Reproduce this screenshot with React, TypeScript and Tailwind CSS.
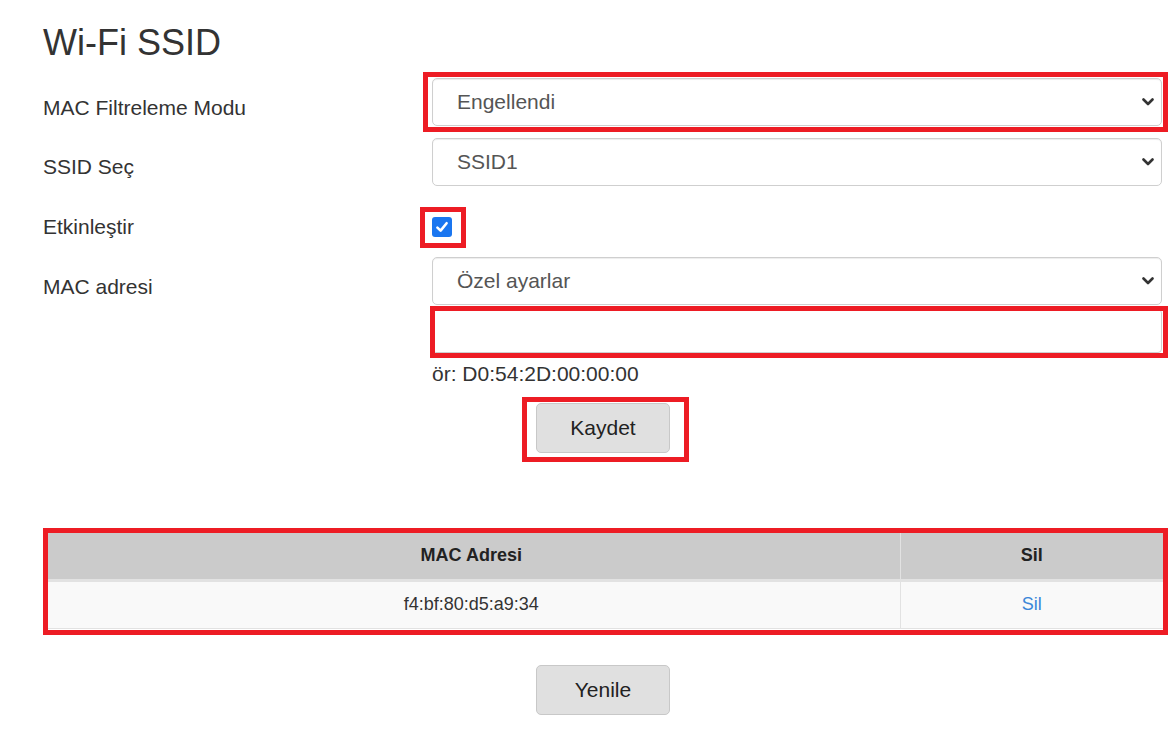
import { ReactNode } from 'react';

// annotation frame drawn over a control
function Mark({ className }: { className: string }) {
  return <div className={`pointer-events-none absolute border-[5px] border-[#ed1c24] ${className}`} />;
}

function Select({ value }: { value: string }) {
  return (
    <div className="relative h-[48px] w-full">
      <select
        defaultValue={value}
        className="h-full w-full appearance-none rounded-[5px] border border-[#cfcfcf] bg-white pl-[24px] text-[21px] text-[#555] shadow-[inset_0_1px_1px_rgba(0,0,0,0.075)] outline-none"
      >
        <option>{value}</option>
      </select>
      <svg
        viewBox="0 0 12 8"
        className="pointer-events-none absolute right-[8px] top-[20px] h-[8px] w-[12px]"
        fill="none"
        stroke="#333"
        strokeWidth="2.6"
        strokeLinecap="round"
        strokeLinejoin="round"
      >
        <path d="M1.5 1.5 6 6l4.5-4.5" />
      </svg>
    </div>
  );
}

function Row({ label, labelClass, children, className = '' }: { label: string; labelClass: string; children: ReactNode; className?: string }) {
  return (
    <div className={`flex ${className}`}>
      <div className={`w-[389px] shrink-0 text-[21px] leading-[24px] text-[#333] ${labelClass}`}>{label}</div>
      <div className="w-[730px]">{children}</div>
    </div>
  );
}

function Button({ children }: { children: ReactNode }) {
  return (
    <button className="h-[50px] w-[134px] rounded-[5px] border border-[#c8c8c8] bg-[#e0e0e0] text-[21px] text-[#222]">
      {children}
    </button>
  );
}

export default function App() {
  return (
    <div className="h-[734px] w-[1170px] overflow-hidden bg-white font-['Liberation_Sans',Arial,sans-serif]">
      <div className="ml-[43px] w-[1120px]">
        <h1 className="mt-[25px] text-[36px] leading-[36px] text-[#333]">Wi-Fi SSID</h1>

        <Row label="MAC Filtreleme Modu" labelClass="pt-[18px]" className="mt-[17px]">
          <div className="relative">
            <Select value="Engellendi" />
            <Mark className="-bottom-[6px] -left-[9px] -right-[6px] -top-[6px]" />
          </div>
        </Row>

        <Row label="SSID Seç" labelClass="pt-[17px]" className="mt-[12px]">
          <Select value="SSID1" />
        </Row>

        <Row label="Etkinleştir" labelClass="" className="mt-[29px] items-center">
          <div className="relative h-[20px] w-[20px]">
            <div className="flex h-[20px] w-[20px] items-center justify-center rounded-[3px] bg-[#1a76f0]">
              <svg viewBox="0 0 16 16" className="h-[16px] w-[16px]" fill="none" stroke="#fff" strokeWidth="2.6" strokeLinecap="round" strokeLinejoin="round">
                <path d="M3.4 8.6 6.6 11.6 12.6 4.2" />
              </svg>
            </div>
            <Mark className="-bottom-[11px] -left-[12px] -right-[14px] -top-[10px]" />
          </div>
        </Row>

        <Row label="MAC adresi" labelClass="pt-[18px]" className="mt-[18px]">
          <Select value="Özel ayarlar" />
          <div className="relative mt-[4px] h-[44px]">
            <input type="text" className="h-full w-full rounded-[4px] border border-[#cfcfcf] bg-white outline-none" />
            <Mark className="-bottom-[5px] -left-[2px] -right-[6px] -top-[3px]" />
          </div>
          <div className="mt-[9px] text-[21px] leading-[24px] text-[#333]">ör: D0:54:2D:00:00:00</div>
        </Row>

        <div className="mt-[17px] flex justify-center">
          <div className="relative">
            <Button>Kaydet</Button>
            <Mark className="-bottom-[9px] -left-[14px] -right-[19px] -top-[6px]" />
          </div>
        </div>

        <div className="relative mt-[80px]">
          <table className="w-full border-collapse text-[18px]">
            <thead>
              <tr className="h-[47px] bg-[#cbcbcb] text-[#222]">
                <th className="w-[857px] border-r border-[#e2e2e2] font-bold">MAC Adresi</th>
                <th className="font-bold">Sil</th>
              </tr>
            </thead>
            <tbody>
              <tr className="h-[48px] border-t-[3px] border-b border-[#e2e2e2] bg-[#f9f9f9]">
                <td className="border-r border-[#e2e2e2] text-center text-[#333]">f4:bf:80:d5:a9:34</td>
                <td className="text-center text-[#3b86d8]">Sil</td>
              </tr>
            </tbody>
          </table>
          <Mark className="-bottom-[6px] -right-[5px] -top-[5px] left-0" />
        </div>

        <div className="mt-[36px] flex justify-center">
          <Button>Yenile</Button>
        </div>
      </div>
    </div>
  );
}
